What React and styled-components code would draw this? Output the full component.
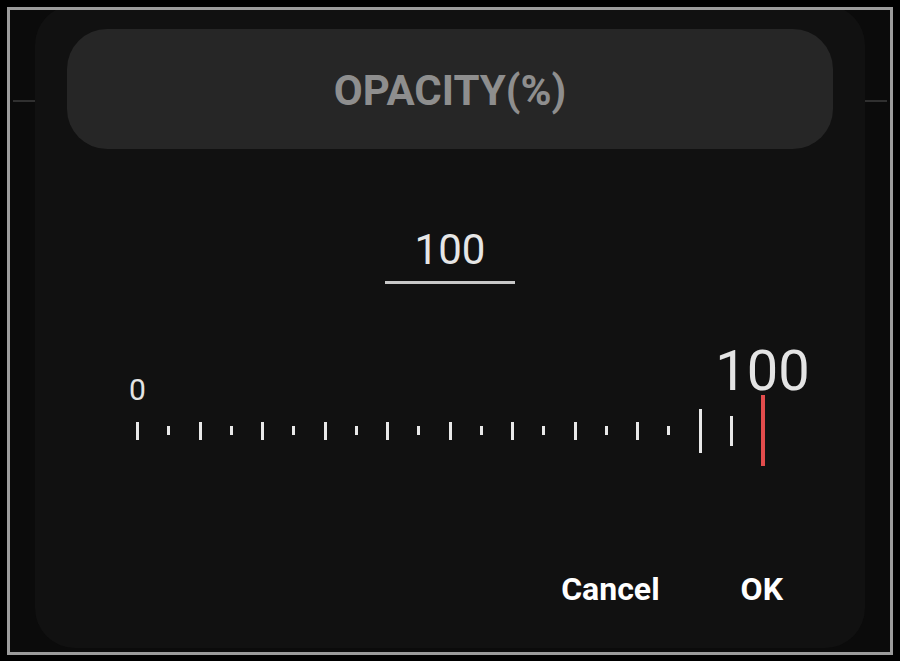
import React from "react";
import styled, { createGlobalStyle } from "styled-components";

const Global = createGlobalStyle`
  html, body { margin: 0; padding: 0; background: #000; }
  body { font-family: Roboto, "Noto Sans", "Liberation Sans", sans-serif; }
  * { box-sizing: border-box; }
`;

const Frame = styled.div`
  margin: 7px;
  width: 886px;
  height: 648px;
  border: 3px solid #9a9a9a;
  overflow: hidden;
  padding: 0 25px;
  background:
    linear-gradient(#303030, #303030) no-repeat 3px 90px / 874px 2px,
    #0b0b0b;
`;

const Dialog = styled.div`
  margin-top: -5px;
  height: 643px;
  border-radius: 40px;
  background: #111111;
  padding: 24px 0 0;
  display: flex;
  flex-direction: column;
  align-items: stretch;
`;

const TitleBar = styled.div`
  margin: 0 32px;
  height: 120px;
  border-radius: 40px;
  background: #262626;
  display: flex;
  align-items: center;
  justify-content: center;
  padding-top: 3px;
  font-size: 42px;
  line-height: 1;
  font-weight: 700;
  color: #8e8e8e;
`;

const ValueField = styled.div`
  align-self: center;
  margin-top: 80px;
  width: 130px;
  padding-bottom: 10px;
  border-bottom: 3px solid #c8c8c8;
  text-align: center;
  font-size: 42px;
  line-height: 1;
  color: #e6e6e6;
`;

const Ruler = styled.div`
  margin-top: 61px;
  display: flex;
  justify-content: center;
`;

const TickCol = styled.div`
  width: 31.25px;
  flex: none;
  display: grid;
  grid-template-rows: 50px 71px;
  justify-items: center;
`;

const LabelSlot = styled.div`
  display: flex;
  align-items: flex-end;
  justify-content: center;
  width: 0;
  overflow: visible;
`;

const Label = styled.span`
  white-space: nowrap;
  font-size: ${(p) => p.$size}px;
  line-height: 1;
  color: #e4e4e4;
  margin-bottom: ${(p) => p.$drop}px;
`;

const TickSlot = styled.div`
  display: flex;
  align-items: center;
`;

const Tick = styled.div`
  width: ${(p) => (p.$active ? 4 : 3)}px;
  height: ${(p) => p.$h}px;
  background: ${(p) => (p.$active ? "#e24c4c" : "#e8e8e8")};
`;

const Actions = styled.div`
  margin-top: 107px;
  display: flex;
  justify-content: flex-end;
  gap: 49px;
  padding-right: 66px;
`;

const ActionButton = styled.button`
  border: none;
  background: transparent;
  padding: 0 16px;
  font-family: Roboto, "Noto Sans", "Liberation Sans", sans-serif;
  font-size: 32px;
  line-height: 1;
  font-weight: 700;
  color: #ffffff;
  cursor: pointer;
`;

const heights = (i) => {
  if (i === 20) return 71;
  if (i === 19) return 30;
  if (i === 18) return 44;
  return i % 2 === 0 ? 18 : 9;
};

export default function App() {
  const ticks = Array.from({ length: 21 }, (_, i) => i);
  return (
    <>
      <Global />
      <Frame>
        <Dialog>
          <TitleBar>OPACITY(%)</TitleBar>
          <ValueField>100</ValueField>
          <Ruler>
            {ticks.map((i) => (
              <TickCol key={i}>
                <LabelSlot>
                  {i === 0 && (
                    <Label $size={30} $drop={-10}>
                      0
                    </Label>
                  )}
                  {i === 20 && (
                    <Label $size={56} $drop={-4}>
                      100
                    </Label>
                  )}
                </LabelSlot>
                <TickSlot>
                  <Tick $h={heights(i)} $active={i === 20} />
                </TickSlot>
              </TickCol>
            ))}
          </Ruler>
          <Actions>
            <ActionButton>Cancel</ActionButton>
            <ActionButton>OK</ActionButton>
          </Actions>
        </Dialog>
      </Frame>
    </>
  );
}
